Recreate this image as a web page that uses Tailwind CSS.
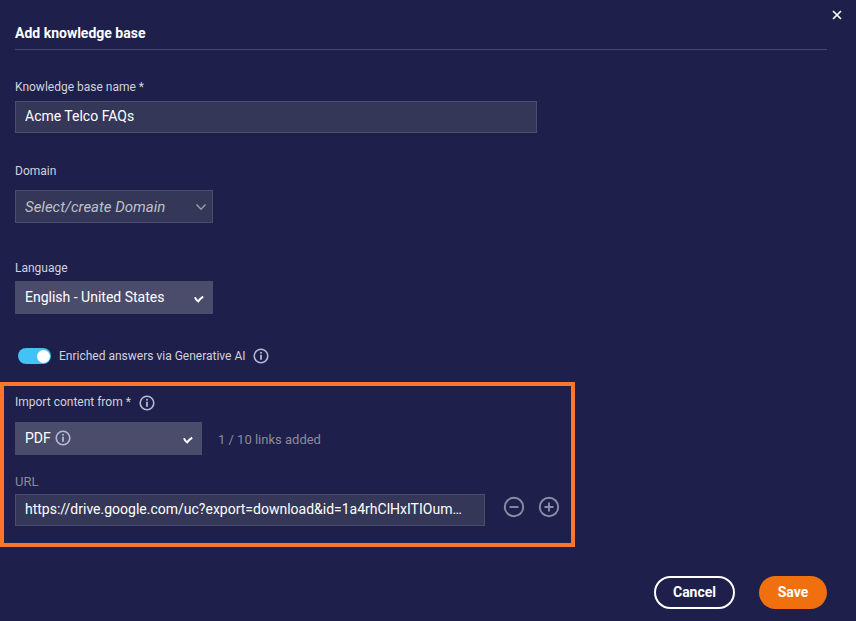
<!DOCTYPE html>
<html lang="en">
<head>
  <meta charset="UTF-8" />
  <meta name="viewport" content="width=device-width, initial-scale=1.0" />
  <title>Add knowledge base</title>
  <script src="https://cdn.jsdelivr.net/npm/@tailwindcss/browser@4"></script>
</head>
<body class="bg-[#1e1f4b] font-[Roboto,sans-serif] text-[#d2d2db]">
  <!-- Icons -->
  <svg class="hidden">
    <symbol id="icon-info" viewBox="0 0 16 16">
      <circle cx="8" cy="8" r="6.8" fill="none" stroke="currentColor" stroke-width="1.6" />
      <circle cx="8" cy="4.7" r="1" fill="currentColor" />
      <path d="M8 6.8V11.8" fill="none" stroke="currentColor" stroke-width="1.8" />
    </symbol>
    <symbol id="icon-check" viewBox="0 0 10 8">
      <path d="M1 2.2Q2 5.2 4.2 6.4Q6.2 3.4 9.2 1.6" fill="none" stroke="currentColor" stroke-width="2" />
    </symbol>
  </svg>

  <form class="relative pb-3">
    <button type="button" aria-label="Close" class="absolute top-2 right-3 flex size-[14px] items-center justify-center text-white">
      <svg class="size-[10px]" viewBox="0 0 10 10" fill="none" stroke="currentColor" stroke-width="1.7"><path d="M1 1L9 9M9 1L1 9" /></svg>
    </button>

    <header class="mr-[29px] ml-[15px] border-b border-[#47486c] pt-6 pb-[7px]">
      <h1 class="text-sm leading-[18px] font-bold text-white">Add knowledge base</h1>
    </header>

    <div class="mt-[29px] flex flex-col items-start gap-[6px] pl-[15px]">
      <label for="kb-name" class="text-xs">Knowledge base name *</label>
      <input id="kb-name" type="text" value="Acme Telco FAQs" class="h-8 w-[522px] border border-[#4b4c6e] bg-[#353759] px-[9px] pb-[2px] text-sm text-white outline-none" />
    </div>

    <div class="mt-[30px] flex flex-col items-start gap-[11px] pl-[15px]">
      <label for="domain" class="text-xs">Domain</label>
      <div class="grid w-[198px] items-center">
        <select id="domain" class="col-start-1 row-start-1 h-[33px] w-full appearance-none border border-[#4b4c6e] bg-[#353759] px-[9px] pt-px text-[15px] text-[#c0c0c6] italic outline-none">
          <option>Select/create Domain</option>
        </select>
        <svg class="pointer-events-none col-start-1 row-start-1 mr-[7px] h-[6px] w-[10px] justify-self-end text-[#a0a1b0]" viewBox="0 0 10 6" fill="none" stroke="currentColor" stroke-width="1.3"><path d="M0.5 0.5L5 5.2L9.5 0.5" /></svg>
      </div>
    </div>

    <div class="mt-[37px] flex flex-col items-start gap-[5px] pl-[15px]">
      <label for="language" class="text-xs">Language</label>
      <div class="grid w-[198px] items-center">
        <select id="language" class="col-start-1 row-start-1 h-[33px] w-full appearance-none bg-[#4b4c6c] px-[10px] pb-[2px] text-sm text-white outline-none">
          <option>English - United States</option>
        </select>
        <svg class="pointer-events-none col-start-1 row-start-1 mt-[2px] mr-[9px] h-2 w-[10px] justify-self-end text-white"><use href="#icon-check" /></svg>
      </div>
    </div>

    <div class="mt-[34px] flex h-4 items-center gap-[7px] pl-[18px]">
      <label class="flex items-center gap-2 text-xs">
        <input type="checkbox" role="switch" checked class="peer sr-only" />
        <span class="flex h-4 w-[33px] items-center justify-end rounded-full bg-[#42c3f3] pr-px"><span class="size-[13px] rounded-full bg-white"></span></span>
        Enriched answers via Generative AI
      </label>
      <svg class="size-4 text-[#b7b8d4]"><use href="#icon-info" /></svg>
    </div>

    <!-- Import source -->
    <section class="mt-[18px] w-[575px] border-4 border-[#fd772b] pt-2 pb-[17px] pl-[11px]">
      <div class="flex h-4 items-center gap-2">
        <label for="source" class="text-xs">Import content from *</label>
        <svg class="mt-[2px] size-4 text-[#b7b8d4]"><use href="#icon-info" /></svg>
      </div>
      <div class="mt-3 flex items-center gap-4">
        <div class="grid w-[187px] items-center">
          <select id="source" class="col-start-1 row-start-1 h-[33px] w-full appearance-none bg-[#4b4c6c] px-[10px] pb-[2px] text-sm text-white outline-none">
            <option>PDF</option>
          </select>
          <svg class="pointer-events-none col-start-1 row-start-1 mb-[2px] ml-10 size-4 text-[#b7b8d4]"><use href="#icon-info" /></svg>
          <svg class="pointer-events-none col-start-1 row-start-1 mt-[2px] mr-[9px] h-2 w-[10px] justify-self-end text-white"><use href="#icon-check" /></svg>
        </div>
        <span class="pt-[2px] text-[13px] text-[#8b8c99]">1 / 10 links added</span>
      </div>
      <label for="url" class="mt-[19px] block text-[13px] leading-4 text-[#8b8c99]">URL</label>
      <div class="mt-1 flex">
        <input id="url" type="text" value="https://drive.google.com/uc?export=download&amp;id=1a4rhClHxITIOumWq7ZkE" class="h-8 w-[470px] overflow-hidden border border-[#4b4c6e] bg-[#353759] pr-[14px] pb-[2px] pl-[9px] text-sm text-ellipsis text-white outline-none" />
        <button type="button" aria-label="Remove link" class="mt-[2px] ml-[18px] size-[22px] text-[#8b8da6]">
          <svg viewBox="0 0 22 22" fill="none" stroke="currentColor" stroke-width="1.9"><circle cx="11" cy="11" r="9.2" /><path d="M6.5 11H15.5" /></svg>
        </button>
        <button type="button" aria-label="Add link" class="mt-[2px] ml-[13px] size-[22px] text-[#8b8da6]">
          <svg viewBox="0 0 22 22" fill="none" stroke="currentColor" stroke-width="1.9"><circle cx="11" cy="11" r="9.2" /><path d="M6.5 11H15.5M11 6.5V15.5" /></svg>
        </button>
      </div>
    </section>

    <div class="mt-[29px] mr-[29px] flex justify-end gap-6">
      <button type="button" class="h-[33px] w-[81px] rounded-full border-2 border-white pb-[2px] text-sm font-bold text-white">Cancel</button>
      <button type="submit" class="h-[33px] w-[68px] rounded-full bg-[#f07010] pb-[2px] text-sm font-bold text-white">Save</button>
    </div>
  </form>
</body>
</html>
